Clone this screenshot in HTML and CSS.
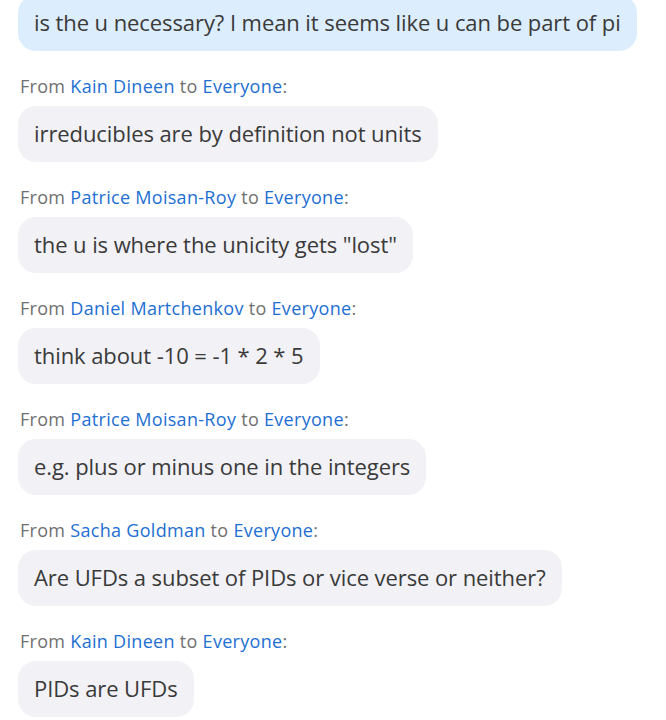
FILE: index.html
```html
<!DOCTYPE html>
<html>
<head>
<meta charset="utf-8">
<link rel="stylesheet" href="styles.css">
</head>
<body>
<div class="chat">
  <div class="bubble mine first">is the u necessary? I mean it seems like u can be part of pi</div>

  <div class="msg">
    <div class="meta">From <span class="name">Kain Dineen</span> to <span class="name">Everyone</span>:</div>
    <div class="bubble">irreducibles are by definition not units</div>
  </div>

  <div class="msg">
    <div class="meta">From <span class="name">Patrice Moisan-Roy</span> to <span class="name">Everyone</span>:</div>
    <div class="bubble">the u is where the unicity gets "lost"</div>
  </div>

  <div class="msg">
    <div class="meta">From <span class="name">Daniel Martchenkov</span> to <span class="name">Everyone</span>:</div>
    <div class="bubble">think about -10 = -1 * 2 * 5</div>
  </div>

  <div class="msg">
    <div class="meta">From <span class="name">Patrice Moisan-Roy</span> to <span class="name">Everyone</span>:</div>
    <div class="bubble">e.g. plus or minus one in the integers</div>
  </div>

  <div class="msg">
    <div class="meta">From <span class="name">Sacha Goldman</span> to <span class="name">Everyone</span>:</div>
    <div class="bubble">Are UFDs a subset of PIDs or vice verse or neither?</div>
  </div>

  <div class="msg">
    <div class="meta">From <span class="name">Kain Dineen</span> to <span class="name">Everyone</span>:</div>
    <div class="bubble">PIDs are UFDs</div>
  </div>
</div>
</body>
</html>
```

FILE: styles.css
```css
html, body {
  margin: 0;
  padding: 0;
  background: #ffffff;
  overflow: hidden;
}

.chat {
  display: flex;
  flex-direction: column;
  align-items: flex-start;
  padding: 0 20px 0 18px;
  font-family: "Open Sans", "Noto Sans", sans-serif;
}

.msg {
  display: flex;
  flex-direction: column;
  align-items: flex-start;
  gap: 8px;
  margin-top: 23px;
}

.meta {
  height: 24px;
  line-height: 24px;
  font-size: 18px;
  color: #707070;
  padding-left: 2px;
  letter-spacing: 0.3px;
}

.name {
  color: #1e6fd2;
}

.bubble {
  height: 56px;
  line-height: 54px;
  padding: 0 16px;
  border-radius: 18px;
  background: #f1f1f6;
  color: #3a3a3a;
  font-size: 22px;
  letter-spacing: -0.08px;
  white-space: nowrap;
}

.bubble.mine {
  background: #dcedfd;
}

.bubble.first {
  margin-top: -5px;
}
```
